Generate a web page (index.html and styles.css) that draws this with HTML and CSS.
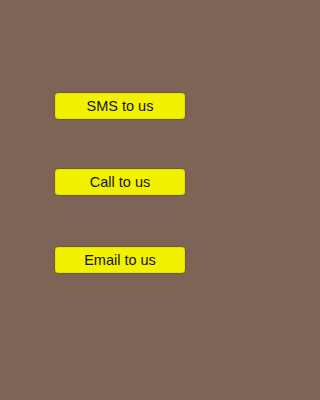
FILE: index.html
```html
<!DOCTYPE html>
<html>
<head>
<meta charset="utf-8">
<link rel="stylesheet" href="styles.css">
</head>
<body>
<div class="screen">
  <div class="buttons">
    <button class="btn">SMS to us</button>
    <button class="btn btn-mid">Call to us</button>
    <button class="btn btn-last">Email to us</button>
  </div>
</div>
</body>
</html>
```
FILE: styles.css
```css
html, body {
  margin: 0;
  padding: 0;
  background: #7e6457;
}
.screen {
  width: 240px;
  height: 400px;
  box-sizing: border-box;
  padding-top: 92px;
}
.buttons {
  display: flex;
  flex-direction: column;
  align-items: center;
}
.btn {
  width: 132px;
  height: 28px;
  box-sizing: border-box;
  margin: 0;
  padding: 0;
  border: 1px solid #6e5e1a;
  border-radius: 4px;
  background: #f2f200;
  box-shadow: inset 0 0 0 1px #e4e20a;
  color: #14130a;
  font-family: "Liberation Sans", Arial, sans-serif;
  font-size: 14.5px;
  line-height: 27px;
  text-align: center;
}
.btn-mid {
  margin-top: 48px;
}
.btn-last {
  margin-top: 50px;
}
```
